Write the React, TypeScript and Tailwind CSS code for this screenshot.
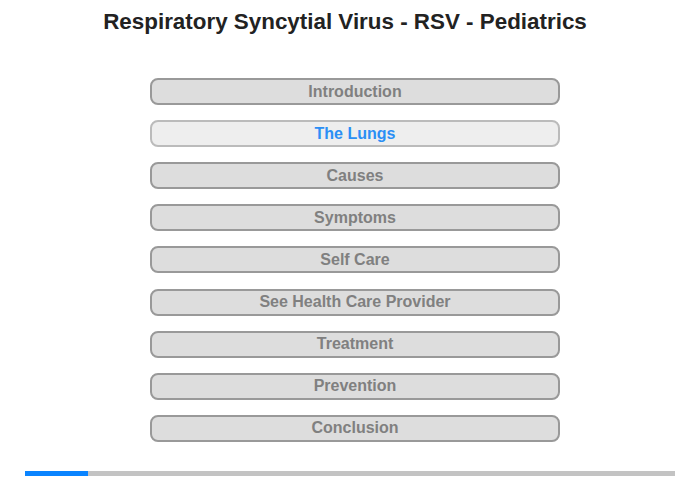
import React from "react";

const items = [
  "Introduction",
  "The Lungs",
  "Causes",
  "Symptoms",
  "Self Care",
  "See Health Care Provider",
  "Treatment",
  "Prevention",
  "Conclusion",
];

export default function App() {
  return (
    <div
      className="w-[700px] h-[480px] bg-white flex flex-col items-center"
      style={{ fontFamily: '"Liberation Sans", Arial, sans-serif' }}
    >
      <h1 className="mt-[9px] mr-[10px] text-[22.4px] leading-[26px] font-bold text-[#222222]">
        Respiratory Syncytial Virus - RSV - Pediatrics
      </h1>
      <div className="mt-[43px] ml-[10px] flex flex-col gap-[15.12px]">
        {items.map((t, i) => (
          <div
            key={t}
            className={
              i === 1
                ? "w-[410px] h-[27px] rounded-[8px] border-2 border-[#bbbbbb] bg-[#eeeeee] flex items-center justify-center text-[16px] font-bold text-[#2b8ff5]"
                : "w-[410px] h-[27px] rounded-[8px] border-2 border-[#999999] bg-[#dddddd] flex items-center justify-center text-[16px] font-bold text-[#808080]"
            }
          >
            {t}
          </div>
        ))}
      </div>
      <div className="mt-[29px] w-[650px] h-[5px] bg-[#c3c3c3] flex">
        <div className="w-[63px] h-full bg-[#0a84ff]" />
      </div>
    </div>
  );
}
